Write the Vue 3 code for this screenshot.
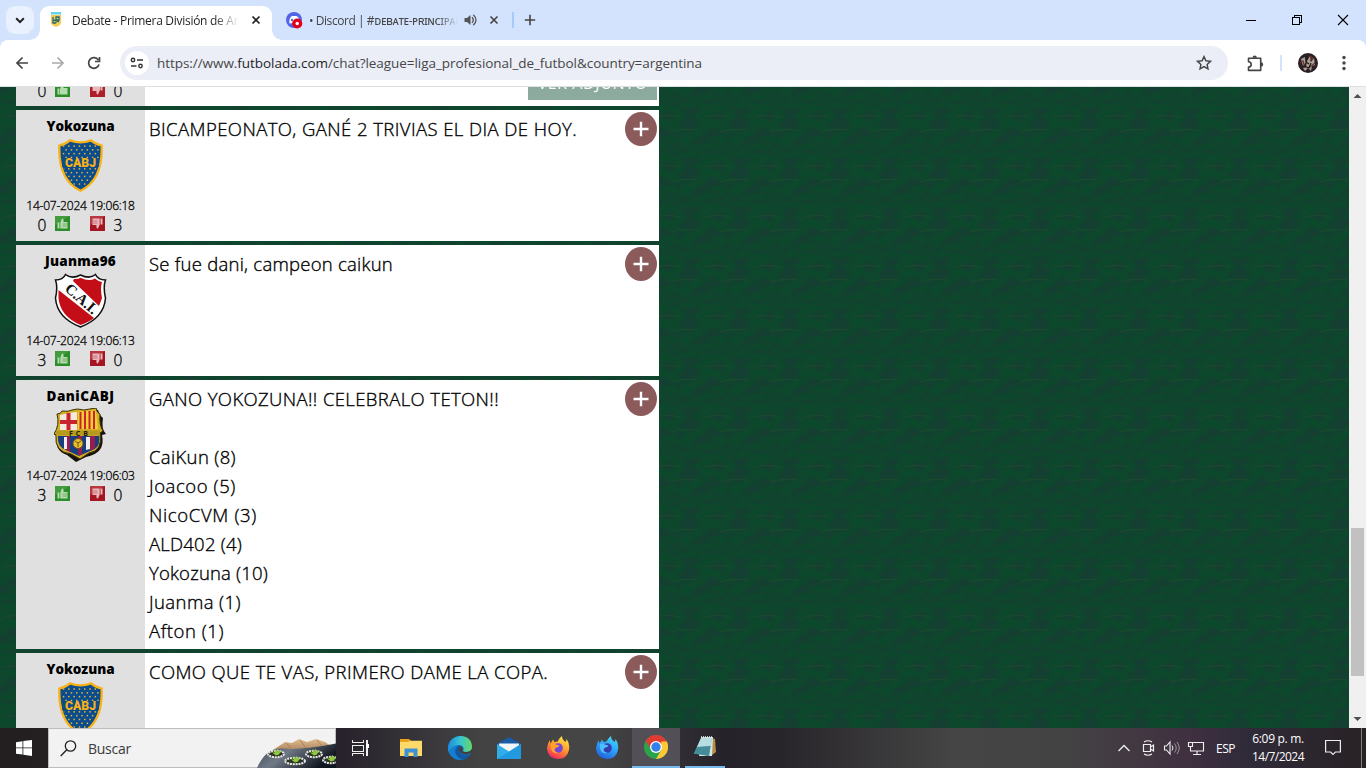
<script setup>
const messages = [
  { name: 'Yokozuna', nameW: 68, crest: 'boca', date: '14-07-2024 19:06:18', up: 0, down: 3, size: 'short', lines: [['BICAMPEONATO, GANÉ 2 TRIVIAS EL DIA DE HOY.', 428]] },
  { name: 'Juanma96', nameW: 71, crest: 'cai', date: '14-07-2024 19:06:13', up: 3, down: 0, size: 'short', lines: [['Se fue dani, campeon caikun', 244]] },
  {
    name: 'DaniCABJ', nameW: 68, crest: 'barca', date: '14-07-2024 19:06:03', up: 3, down: 0, size: 'tall',
    lines: [['GANO YOKOZUNA!! CELEBRALO TETON!!', 350], ['', 0], ['CaiKun (8)', 87], ['Joacoo (5)', 87], ['NicoCVM (3)', 108], ['ALD402 (4)', 93], ['Yokozuna (10)', 119], ['Juanma (1)', 92], ['Afton (1)', 75]]
  },
  { name: 'Yokozuna', nameW: 68, crest: 'boca', size: 'short', lines: [['COMO QUE TE VAS, PRIMERO DAME LA COPA.', 399]] }
]

const dots = []
for (let r = 0; r < 11; r++) {
  if (r === 4 || r === 5) continue
  for (let c = 0; c < 7; c++) dots.push([5.5 + c * 5.3 + (r % 2) * 2.6, 7 + r * 3.8])
}

// Spreads the tracking so that a line takes the given width.
const vFit = (el, { value }) => {
  const n = el.textContent.length
  if (!value || !n) return
  el.style.letterSpacing = '0px'
  const w = el.getBoundingClientRect().width
  el.style.letterSpacing = (value - w) / n + 'px'
}
</script>

<template>
  <div class="screen">
    <header class="tabs">
      <button class="tab-search"><svg width="28" height="28" viewBox="0 0 28 28"><path d="M10.2 12.3l3.8 3.8 3.8-3.8" fill="none" stroke="#1f1f1f" stroke-width="2" /></svg></button>
      <div class="tab active">
        <svg class="fav" width="12" height="16" viewBox="0 0 12 16">
          <path d="M1 3h10v8q0 2-5 4Q1 13 1 11z" fill="#f0cb54" /><path d="M1 0h10v2.5H1z" fill="#62d4e9" />
          <path d="M3 5v6h3M6 11V5h3v3H6M3 8l6 1.5" fill="none" stroke="#276b70" stroke-width="1.3" />
        </svg>
        <span class="tab-title t1"><span v-fit="186">Debate - Primera División de Argen</span></span>
        <svg class="x1" width="10" height="10" viewBox="0 0 10 10"><path d="M1.5 1.5l7 7M8.500 1.500l-7 7" stroke="#222" stroke-width="1.7" /></svg>
      </div>
      <div class="tab second">
        <svg class="fav2" width="17" height="17" viewBox="0 0 17 17">
          <circle cx="8" cy="8" r="8" fill="#5364e9" /><path d="M3.500 11.500Q2.600 6 6 4l4.500 0q2 1 2.500 3L8 11z" fill="#fff" /><circle cx="6" cy="8" r="1.200" fill="#5364e9" />
          <circle cx="11.200" cy="11.500" r="5.100" fill="#e3001b" /><circle cx="11.200" cy="11.500" r="1.700" fill="#fff" />
        </svg>
        <span class="tab-title t2"><span v-fit="151">• Discord | #ᴅᴇʙᴀᴛᴇ-ᴘʀɪɴᴄɪᴘᴀʟ</span></span>
        <svg class="snd" width="14" height="12" viewBox="0 0 14 12"><path d="M.5 4h2.500l3.500-3v10L3 8H.500z" fill="#555" /><path d="M8 3.200q2.600 2.800 0 5.600M9.300.800q5.400 5.200 0 10.400" fill="none" stroke="#555" stroke-width="1.300" /></svg>
        <svg class="x2" width="10" height="10" viewBox="0 0 10 10"><path d="M1.500 1.500l7 7M8.500 1.500l-7 7" stroke="#444" stroke-width="1.600" /></svg>
      </div>
      <i class="sep"></i>
      <svg class="new" width="12" height="12" viewBox="0 0 12 12"><path d="M6 .800v10.400M.800 6h10.400" stroke="#444" stroke-width="1.600" /></svg>
      <div class="win">
        <svg width="46" height="40" viewBox="0 0 46 40" shape-rendering="crispEdges"><path d="M18 20.500h10" stroke="#000" /></svg>
        <svg width="46" height="40" viewBox="0 0 46 40" shape-rendering="crispEdges"><path d="M18.500 17.500h7v7h-7zM20.500 17v-1.500h7v7H26" fill="none" stroke="#000" /></svg>
        <svg width="46" height="40" viewBox="0 0 46 40"><path d="M18 15l10 10M28 15L18 25" stroke="#000" stroke-width="1.100" /></svg>
      </div>
    </header>

    <nav class="toolbar-wrap">
      <div class="toolbar">
        <div class="nav-icons">
          <svg width="36" height="46" viewBox="0 0 36 46"><path d="M22.500 17.500L17 23l5.500 5.500M17 23h11" fill="none" stroke="#444" stroke-width="1.700" /></svg>
          <svg width="36" height="46" viewBox="0 0 36 46"><path d="M21.500 17.500L27 23l-5.500 5.500M27 23H16" fill="none" stroke="#aaa" stroke-width="1.700" /></svg>
          <svg width="36" height="46" viewBox="0 0 36 46"><path d="M26.300 20A5.300 5.300 0 1 0 27 24.500M27.500 17v4.500H23" fill="none" stroke="#444" stroke-width="1.700" /></svg>
        </div>
        <div class="omni">
          <span class="site"><svg width="14" height="14" viewBox="0 0 14 14"><path d="M7 4h6M1 10h5.500" stroke="#333" stroke-width="1.500" /><circle cx="3" cy="4" r="1.700" fill="none" stroke="#333" stroke-width="1.400" /><circle cx="10.500" cy="10" r="1.700" fill="none" stroke="#333" stroke-width="1.400" /></svg></span>
          <span class="url" v-fit="545">https://www.<b>futbolada.com</b>/chat?league=liga_profesional_de_futbol&amp;country=argentina</span>
          <svg class="star" width="16" height="16" viewBox="0 0 16 16"><path d="M8 1.600l1.900 4.200 4.600.500-3.400 3.100.900 4.500L8 11.600l-4 2.300.900-4.500L1.500 6.300l4.600-.500z" fill="none" stroke="#444" stroke-width="1.400" /></svg>
        </div>
        <svg class="ext" width="17" height="18" viewBox="0 0 17 18"><path d="M1.500 4.200h12.200v12.200H1.500v-3.300q2.700-.200 2.700-2.700t-2.700-2.700z" fill="none" stroke="#444" stroke-width="1.600" stroke-linejoin="round" /><path d="M5.500 3.700a2.200 2.200 0 0 1 4.400 0zM14 8.200a2.200 2.200 0 0 1 0 4.400z" fill="#444" /></svg>
        <i class="tsep"></i>
        <svg class="avatar" width="20" height="20" viewBox="0 0 20 20"><circle cx="10" cy="10" r="10" fill="#292123" /><path d="M3 6l4-2 1 5-3 4zM9 8l3-5 1 6 3-4 1 7-3 1-1 5-3-3-3 3-2-3 3-1z" fill="#aaa096" /><path d="M2 10l3-2 2 7M11 3l4 2-3 3M12 14l5-4" stroke="#70312f" fill="none" stroke-width="1.200" /><path d="M8 3v6l3 2M6 13l5 2 2-5" stroke="#191617" fill="none" stroke-width="1.200" /></svg>
        <svg class="dots" width="4" height="16" viewBox="0 0 4 16"><g fill="#444"><circle cx="2" cy="2.500" r="1.700" /><circle cx="2" cy="8" r="1.700" /><circle cx="2" cy="13.500" r="1.700" /></g></svg>
      </div>
    </nav>

    <main class="page">
      <svg class="felt" width="1349" height="641">
        <defs>
          <filter id="grain" x="0" y="0" width="100%" height="100%" color-interpolation-filters="sRGB"><feTurbulence type="fractalNoise" baseFrequency=".06 .12" numOctaves="4" seed="4" stitchTiles="stitch" /><feColorMatrix values="0 0 0 0 .09  0 0 0 0 .23  0 0 0 0 .2  3 0 0 0 -1.100" /></filter>
          <pattern id="cloth" width="50" height="50" patternUnits="userSpaceOnUse">
            <rect width="50" height="50" fill="#0c482b" /><rect width="50" height="50" filter="url(#grain)" opacity=".75" />
            <path d="M20 45q12-4 28-2M4 30q16-3 26 0" stroke="#2a4c30" stroke-width="1" opacity=".5" fill="none" />
          </pattern>
        </defs>
        <rect width="1349" height="641" fill="url(#cloth)" />
      </svg>
      <section class="chat">
        <article class="card cut">
          <aside class="side">
            <div class="votes">
              <span class="num">0</span>
              <svg class="up" width="15" height="15" viewBox="0 0 15 15"><rect width="15" height="15" fill="#2c8e2a" /><path d="M2.500 6.500h2v6h-2zM5 7l2-4.500q2-.500 1.500 3.500h4v6.500H5z" fill="#b5dcae" /></svg>
              <svg class="down" width="15" height="15" viewBox="0 0 15 15"><rect width="15" height="15" fill="#ad1d2a" /><path d="M12.500 2.500h-2v6h2zM10 8l-2 4.500q-2 .500-1.500-3.500h-4V2.500H10z" fill="#eab8bc" /></svg>
              <span class="num">0</span>
            </div>
          </aside>
          <div class="body"><button class="attach"><span v-fit="110">VER ADJUNTO</span></button></div>
        </article>

        <article v-for="(m, i) in messages" :key="i" class="card" :class="m.size">
          <aside class="side">
            <div class="name"><span v-fit="m.nameW">{{ m.name }}</span></div>
            <div class="crest">
              <svg v-if="m.crest === 'boca'" width="45" height="53" viewBox="0 0 45 53">
                <clipPath id="boca-in"><path d="M3 6.500Q8 6 12 2.500q10.500 4 21 0Q37 6 42 6.500 42.500 41 22.500 50 2.500 41 3 6.500z" /></clipPath>
                <path d="M1.400 6.500Q8 5 12 1.400q10.500 4 21 0Q37 5 43.600 6.500 45 41 22.500 51.700 0 41 1.400 6.500z" fill="#0b4c8c" stroke="#f8b116" stroke-width="2.300" />
                <g clip-path="url(#boca-in)" fill="#e3b53c"><rect v-for="(d, k) in dots" :key="k" :x="d[0] - .7" :y="d[1] - .7" width="1.500" height="1.500" /></g>
                <path d="M4 19h37v9H4z" fill="#0b4c8c" />
                <text x="7" y="27.800" textLength="31" lengthAdjust="spacingAndGlyphs" class="boca-t">CABJ</text>
              </svg>
              <svg v-else-if="m.crest === 'cai'" width="53" height="55" viewBox="0 0 53 55">
                <path d="M1.500 7Q9 7 11.500 1.500q6 5 15 .500 9 4.500 15-.500Q44 7 51.500 7 49 14 51.500 25 50 45 26.500 54 3 45 1.500 25 4 14 1.500 7z" fill="#fff" stroke="#111" stroke-width="1.500" />
                <path d="M20 6q4 .500 6.500-1.200Q35 9 41 5.500q3 3 7 3.500-2 6 0 16-1 3-3 8L19 8z" fill="#c30d17" />
                <path d="M4.500 17L40 45q-5 4-13.500 7Q6 43 4.500 25z" fill="#c30d17" />
                <g transform="translate(10 17) rotate(41)"><text textLength="38" lengthAdjust="spacing" class="cai-t">C.A.I.</text></g>
              </svg>
              <svg v-else width="53" height="55" viewBox="0 0 53 55">
                <path d="M5 8q5-1 6-4l33-2q2 6 5 8-2 11 3 16l-4 1q4 18-16 22l-10 5-9-7Q0 43 3 28l-3-2Q6 19 5 8z" fill="#16120d" />
                <path d="M3 6q4 0 5-3 7 1 10-1 5-2 12 0 5-1 12-2 1 5 4 6-1 11 3 17l-3 2q3 18-11 20l-9 6-9-5Q0 44 2 27l-2-1Q6 17 3 6z" fill="#d3ae24" stroke="#382f0a" />
                <path d="M6 7q12-3 17-3v18H6z" fill="#f3e9dc" /><path d="M6 12h17v4H6zM12.500 5h4v17h-4z" fill="#c9242d" />
                <path d="M24 4q10-2 18-1l2 18H24z" fill="#f4cf34" /><path d="M26.500 4v17M31 3v18M35.500 3v18M40 3v18" stroke="#c9242d" stroke-width="2" />
                <path d="M4 28h41q2 12-9 15l-11 5-13-6Q3 39 4 28z" fill="#173f80" /><path d="M8 28h4v14l4 2V28h8v19h4V28h8v15l5-3V28z" fill="#951e4f" /><path d="M10 29h3v12h-3zM32 29h4v12l-4 1z" fill="#f2edf0" />
                <circle cx="24" cy="35.500" r="5" fill="#e7bf2c" stroke="#71501a" /><path d="M21 33l3 2 3-2M24 35v4" stroke="#71501a" fill="none" />
                <path d="M2 22.500h44v5H2z" fill="#b69a20" /><text x="15" y="27.500" textLength="19" class="fcb-t">FCB</text>
              </svg>
            </div>
            <template v-if="m.date">
              <div class="date"><span v-fit="108.500">{{ m.date }}</span></div>
              <div class="votes">
                <span class="num">{{ m.up }}</span>
                <svg class="up" width="15" height="15" viewBox="0 0 15 15"><rect width="15" height="15" fill="#2c8e2a" /><path d="M0 0h15L0 9z" fill="#58a94f" opacity=".5" /><path d="M2.500 6.500h2v6h-2zM5.300 6.500L7 2.500q2-.500 1.500 3.500h4v6.500H5.300z" fill="#b5dcae" /><path d="M7.500 8h5M7.500 10h4.500" stroke="#569b50" stroke-width=".7" /></svg>
                <svg class="down" width="15" height="15" viewBox="0 0 15 15"><rect width="15" height="15" fill="#a61622" /><path d="M0 0h15L0 9z" fill="#cd555e" opacity=".5" /><path d="M12.500 2.500h-2v6h2zM9.700 8.500L8 12.500q-2 .500-1.500-3.500h-4V2.500h7.200z" fill="#eab8bc" /><path d="M2.500 5h5M3 7h4.500" stroke="#c0525b" stroke-width=".7" /></svg>
                <span class="num">{{ m.down }}</span>
              </div>
            </template>
          </aside>
          <div class="body">
            <p v-for="(l, j) in m.lines" :key="j"><span v-fit="l[1]">{{ l[0] }}</span></p>
            <button class="plus"><svg width="32" height="34" viewBox="0 0 32 34"><ellipse cx="16" cy="17" rx="16" ry="17" fill="#8a5b5a" /><path d="M16 9.800v14.400M8.500 17h15" stroke="#fff" stroke-width="2.400" /></svg></button>
          </div>
        </article>
      </section>
      <div class="scroll">
        <svg width="17" height="17" viewBox="0 0 17 17"><path d="M4.500 11l4-4 4 4z" fill="#505050" /></svg>
        <div class="thumb"></div>
        <svg width="17" height="17" viewBox="0 0 17 17"><path d="M4.500 6l4 4 4-4z" fill="#505050" /></svg>
      </div>
    </main>

    <footer class="taskbar">
      <div class="start"><svg width="16" height="16" viewBox="0 0 16 16"><path d="M0 2.200L6.500 1.300v6.200H0zM7.300 1.100L16 0v7.500H7.300zM0 8.300h6.500v6.300L0 13.700zM7.300 8.300H16V16l-8.700-1.200z" fill="#fff" /></svg></div>
      <div class="search">
        <svg class="lens" width="17" height="17" viewBox="0 0 17 17"><circle cx="10.500" cy="6" r="5.200" fill="none" stroke="#222" stroke-width="1.300" /><path d="M6.800 9.800L.700 16" stroke="#222" stroke-width="1.400" /></svg>
        <span v-fit="43">Buscar</span>
        <svg class="scene" width="80" height="30" viewBox="0 0 80 30">
          <defs><linearGradient id="rock" x1="0" x2="1" y1="0" y2="0.400"><stop offset="0" stop-color="#3d4552" /><stop offset=".45" stop-color="#707987" /><stop offset="1" stop-color="#111720" /></linearGradient><linearGradient id="hill" x2="0" y2="1"><stop stop-color="#e3bd8c" /><stop offset="1" stop-color="#a67c5c" /></linearGradient></defs>
          <path d="M14 14l9-6 6-4 7 1 7-4 8 3 9-3 9 3 6 4v6z" fill="url(#hill)" /><path d="M30 5l5 5M44 2l6 8M61 2l5 6" stroke="#9a7052" stroke-width=".7" />
          <path d="M1 30Q10 9 27 10.500q18 2 53-5V30z" fill="url(#rock)" />
          <g v-for="(p, k) in [[20, 16, 8], [39, 23, 10], [58, 16, 8], [75, 22, 8]]" :key="k"><ellipse :cx="p[0]" :cy="p[1]" :rx="p[2]" ry="3.200" fill="#2c332c" stroke="#e8e7df" stroke-width="2" stroke-dasharray="2 .8" /><path :d="`M${p[0]} ${p[1] + 1.5}l-4-3 3 0-1-3 2 2 2-3 0 3 3-1-2 4z`" fill="#8ecb3a" /></g>
        </svg>
      </div>
      <div class="apps">
        <div class="app"><svg width="17" height="16" viewBox="0 0 17 16" shape-rendering="crispEdges"><path d="M.500 0v2.500h11V0M.500 5.500h11v6H.500zM.500 16v-2.500h11V16M15 0v16" fill="none" stroke="#eee" stroke-width="1.200" /><path d="M13.500 4h3v3.500h-3z" fill="#fff" /></svg></div>
        <div class="app"><svg width="22" height="20" viewBox="0 0 22 20"><path d="M0 1h9l2 2h11v15H0z" fill="#e9a31b" /><path d="M0 4h8l2-1.200h12V18H0z" fill="#ffd96a" /><path d="M4.500 10.500h13V19h-4v-4.500h-5V19h-4z" fill="#3d91d4" /></svg></div>
        <div class="app"><svg width="24" height="24" viewBox="0 0 24 24"><defs><linearGradient id="edge" x2="1"><stop stop-color="#2088db" /><stop offset=".5" stop-color="#36c4d2" /><stop offset="1" stop-color="#68d960" /></linearGradient></defs><circle cx="12" cy="12" r="12" fill="#147fcf" /><path d="M0 11C2-3 24-4 24 11c0 5-6 6-9 4 2-3 0-6-4-6-6 0-9 4-11 7z" fill="url(#edge)" /><path d="M11 9c-6 3-5 12 3 14.500 4-.500 7-2 9-6-5 3-11 1-12-3q-.500-2.500 1.500-4z" fill="#1259a2" /><path d="M13 10q-5 3 0 7 5 3 11-.500V13q-2 3.500-7.500 3-2-.300-2-1.500 1.500-2-1.500-4.500z" fill="#404040" /></svg></div>
        <div class="app"><svg width="24" height="22" viewBox="0 0 24 22"><path d="M0 7L12 0l12 7v4H0z" fill="#175ca7" /><path d="M2 6.500h20v9H2z" fill="#f4f5f8" /><path d="M0 7l12 7.500L24 7v15H0z" fill="#31aee8" /><path d="M0 22l24-15v15z" fill="#188fda" opacity=".65" /></svg></div>
        <div v-for="blue in [false, true]" :key="String(blue)" class="app"><svg width="24" height="24" viewBox="0 0 24 24">
          <defs><linearGradient :id="blue ? 'fb' : 'fo'" x1=".8" y1="0" x2=".3" y2="1"><stop :stop-color="blue ? '#43ddf5' : '#fff04b'" /><stop offset=".5" :stop-color="blue ? '#2da1fa' : '#ff972d'" /><stop offset="1" :stop-color="blue ? '#2261d8' : '#f52362'" /></linearGradient></defs>
          <path d="M2 8l1.500-4 1 3.500L7 3.500l1.500 2.500 3-.500Q13 2 16 0q0 4 4 6l.500-3q3.500 5 2.500 11-2 9-11 9Q1 22 1 12z" :fill="`url(#${blue ? 'fb' : 'fo'})`" /><circle cx="12" cy="12" r="4.800" :fill="blue ? '#343cae' : '#7446d8'" /><path d="M5 8q3-1 5 .500l3.500 1q-1 2-3 2-2 .500-2 2.500 1 2.500 4 3-5 1-7-3-1-3-.500-6z" :fill="blue ? '#4dbdfb' : '#ffa02d'" />
        </svg></div>
        <div class="app on"><svg width="24" height="24" viewBox="0 0 24 24"><circle cx="12" cy="12" r="12" fill="#2ba24c" /><path d="M1.600 6A12 12 0 0 1 22.400 6L24 10H12l-5 4z" fill="#df3b30" /><path d="M22.800 6.500A12 12 0 0 1 12 24l5.200-9V6.500z" fill="#fcc934" /><circle cx="12" cy="12" r="6" fill="#fff" /><circle cx="12" cy="12" r="4.700" fill="#3380e9" /></svg></div>
        <div class="app open"><svg width="24" height="24" viewBox="0 0 24 24"><path d="M19 3l3 1 1 13-4 3z" fill="#b68d47" /><path d="M9 2h11l-1 19H6z" fill="#d5e6e7" /><path d="M8.500 2l10.500 1-3 18-15-2.500z" fill="#82b8bf" /><path d="M8.500 2l10.500 1-1.500 8L4 12z" fill="#b8dde0" /><path d="M4 12l13.500-1-1.500 10-15-2.500z" fill="#438c98" /><path d="M8 2h12" stroke="#eee" stroke-dasharray="1 1" stroke-width="1.500" /></svg></div>
      </div>
      <div class="tray">
        <svg width="24" height="40" viewBox="0 0 24 40"><path d="M6.500 23l5.500-5.500 5.500 5.500" fill="none" stroke="#eee" stroke-width="1.300" /></svg>
        <svg width="24" height="40" viewBox="0 0 24 40"><path d="M7.500 16.500h7v7h-7zM14.500 19l3-2v6l-3-2M8 14q4-2.500 8 0M8 26q4 2.500 8 0" fill="none" stroke="#eee" stroke-width="1.200" /></svg>
        <svg width="24" height="40" viewBox="0 0 24 40"><path d="M4.500 18h2l3.500-4v12l-3.500-4h-2z" fill="none" stroke="#eee" stroke-width="1.100" /><path d="M12 17.500q2 2.500 0 5" fill="none" stroke="#eee" /><path d="M14.500 15.500q3.500 4.500 0 9M17 14q4.500 6 0 12" fill="none" stroke="#999" /></svg>
        <svg width="24" height="40" viewBox="0 0 24 40"><path d="M8.500 14.500h11v8.500H6.500v-4.500M13 23v3M9 26.500h8M4.500 14.500h4v4h-4z" fill="none" stroke="#eee" stroke-width="1.100" /></svg>
        <span class="lang"><span v-fit="19">ESP</span></span>
        <div class="clock"><span v-fit="51.500">6:09 p. m.</span><span v-fit="52">14/7/2024</span></div>
        <svg class="note" width="16" height="18" viewBox="0 0 16 18"><path d="M.6 1.500h14.800v11.500h-5L8 15.500 5.600 13h-5z" fill="none" stroke="#eee" stroke-width="1.200" /></svg>
        <i class="peek"></i>
      </div>
    </footer>
  </div>
</template>

<style>
html, body { margin: 0; overflow: hidden; }
</style>

<style scoped>
.screen { width: 1366px; height: 768px; display: flex; flex-direction: column; overflow: hidden; font-family: "Open Sans", "Noto Sans", sans-serif; color: #1f1f1f; }
svg { display: block; flex: none; }
button { border: 0; padding: 0; font: inherit; }
span { white-space: pre; }
[class] > span { display: inline-block; }

.tabs { height: 40px; display: flex; background: #d3e3fd; flex: none; }
.tab-search { width: 28px; height: 28px; margin: 6px 6px 0; border-radius: 9px; background: #e9f1fe; }
.tab { position: relative; display: flex; align-items: center; height: 28px; font-size: 12px; }
.tab.active { width: 232px; margin-top: 6px; padding-bottom: 6px; background: #fff; border-radius: 9px 9px 0 0; }
.active::before, .active::after { content: ""; position: absolute; bottom: 0; width: 10px; height: 10px; }
.active::before { left: -10px; background: radial-gradient(circle at 0 0, #d3e3fd 9.500px, #fff 10px); }
.active::after { right: -10px; background: radial-gradient(circle at 100% 0, #d3e3fd 9.500px, #fff 10px); }
.fav { margin-left: 10px; }
.tab-title { overflow: hidden; line-height: 20px; padding-top: 1px; }
.t1 { width: 167px; margin-left: 10px; -webkit-mask-image: linear-gradient(to right, #000 85%, transparent); mask-image: linear-gradient(to right, #000 85%, transparent); }
.x1 { margin-left: 12px; }
.second { width: 231px; margin-top: 6px; color: #444; }
.fav2 { margin-left: 14px; }
.t2 { width: 149px; margin-left: 6px; -webkit-mask-image: linear-gradient(to right, #000 86%, transparent); mask-image: linear-gradient(to right, #000 86%, transparent); }
.snd { margin-left: 6px; }
.x2 { margin-left: 11px; }
.sep { width: 2px; height: 16px; margin: 12px 0 0 9px; background: #a8c7fa; }
.new { margin: 14px 0 0 10px; }
.win { margin-left: auto; display: flex; }

.toolbar-wrap { height: 47px; background: #d3e3fd; flex: none; }
.toolbar { height: 46px; display: flex; align-items: center; background: #fff; border-radius: 8px 8px 0 0; border-bottom: 1px solid #dedfe1; }
.nav-icons { display: flex; width: 120px; }
.omni { width: 1108px; height: 34px; border-radius: 17px; background: #ebeef7; display: flex; align-items: center; }
.site { width: 24px; height: 24px; margin-left: 5px; border-radius: 50%; background: #fff; display: flex !important; align-items: center; justify-content: center; }
.url { margin-left: 8px; font-size: 13.500px; color: #474747; }
.url b { font-weight: 400; color: #1f1f1f; }
.star { margin-left: auto; margin-right: 16px; }
.ext { margin-left: 19px; margin-top: -1px; }
.tsep { width: 2px; height: 16px; margin-left: 16px; background: #d3e3fd; }
.avatar { margin-left: 16px; }
.dots { margin-left: 24px; }

.page { position: relative; height: 641px; display: flex; justify-content: space-between; overflow: hidden; background: #0f452f; flex: none; }
.felt { position: absolute; left: 0; top: 0; }
.chat { position: relative; width: 643px; margin-left: 16px; display: flex; flex-direction: column; gap: 4px; color: #000; }
.card { display: flex; background: #fff; flex: none; overflow: hidden; }
.cut { height: 19px; align-items: flex-end; }
.cut .side { padding: 0 0 6px; height: 80px; box-sizing: border-box; display: flex; flex-direction: column; justify-content: flex-end; }
.short { height: 131px; }
.tall { height: 269px; }
.side { width: 129px; padding-top: 6px; background: #e0e0e0; text-align: center; flex: none; }
.name { height: 20px; line-height: 20px; font-size: 13.500px; font-weight: 800; }
.crest { height: 59px; display: flex; align-items: center; justify-content: center; }
.date { height: 20px; line-height: 22px; font-size: 12px; font-weight: 300; -webkit-text-stroke: .3px #000; }
.votes { height: 19px; display: flex; align-items: center; justify-content: center; margin-right: 1px; }
.votes .up { margin: -3px 20px 0 4px; }
.votes .down { margin: -3px 4px 0 0; }
.num { width: 18px; font-size: 15.500px; line-height: 19px; padding-top: 2px; font-weight: 300; -webkit-text-stroke: .3px #000; }
.body { position: relative; flex: 1; padding: 4px 0 0 4px; }
.cut .body { height: 76px; padding: 0; display: flex; align-items: flex-end; justify-content: flex-end; }
.attach { width: 129px; height: 40px; margin: 0 2px 6px 0; background: #8caa9d; color: #fff; font-size: 16px; line-height: 22px; padding-top: 6px; }
.body p { margin: 0; height: 29px; line-height: 29px; font-size: 18.500px; font-weight: 300; -webkit-text-stroke: .35px #000; }
.plus { position: absolute; right: 2px; top: 2px; background: none; }
.boca-t { font: 900 12px "Roboto", sans-serif; fill: #f8b116; }
.cai-t { font: 900 15px "Liberation Serif", serif; fill: #111; }
.fcb-t { font: 700 7px "Open Sans", sans-serif; fill: #221b08; }

.scroll { position: relative; width: 17px; display: flex; flex-direction: column; background: #f0f0f0; }
.thumb { width: 13px; height: 148px; margin: 424px 0 35px 2px; background: #c1c1c1; }

.taskbar { height: 40px; display: flex; flex: none; background: linear-gradient(90deg, #231f20 0, #28222c 25%, #434343 35%, #454545 44%, #25222a 53%, #28252a 57%, #454545 70%, #444344 78%, #403040 87%, #302b3a 91%, #282225 100%); color: #fff; }
.start { width: 48px; display: flex; align-items: center; justify-content: center; }
.search { position: relative; width: 288px; box-sizing: border-box; border: 1px solid #bdbdbd; background: #f2f2f2; color: #3a3a3a; display: flex; align-items: center; font-size: 14px; }
.lens { margin: 0 11px 0 11px; }
.scene { position: absolute; right: -1px; bottom: -1px; }
.apps { display: flex; }
.app { width: 48px; height: 40px; margin-right: 1px; display: flex; align-items: center; justify-content: center; box-sizing: border-box; }
.app:first-child { margin-right: 3px; }
.on { background: #525056; border-bottom: 2px solid #76b9ed; }
.open { width: 40px; margin-left: 4px; border-bottom: 2px solid #76b9ed; }
.tray { margin-left: auto; display: flex; align-items: center; }
.lang { width: 19px; margin-left: 8px; font-size: 12px; }
.clock { width: 78px; margin-left: 8px; display: flex; flex-direction: column; align-items: center; font-size: 12px; line-height: 18px; padding-right: 8px; box-sizing: border-box; }
.note { margin-left: 4px; }
.peek { width: 1px; height: 40px; margin-left: 20px; margin-right: 4px; background: #807c80; }
</style>
